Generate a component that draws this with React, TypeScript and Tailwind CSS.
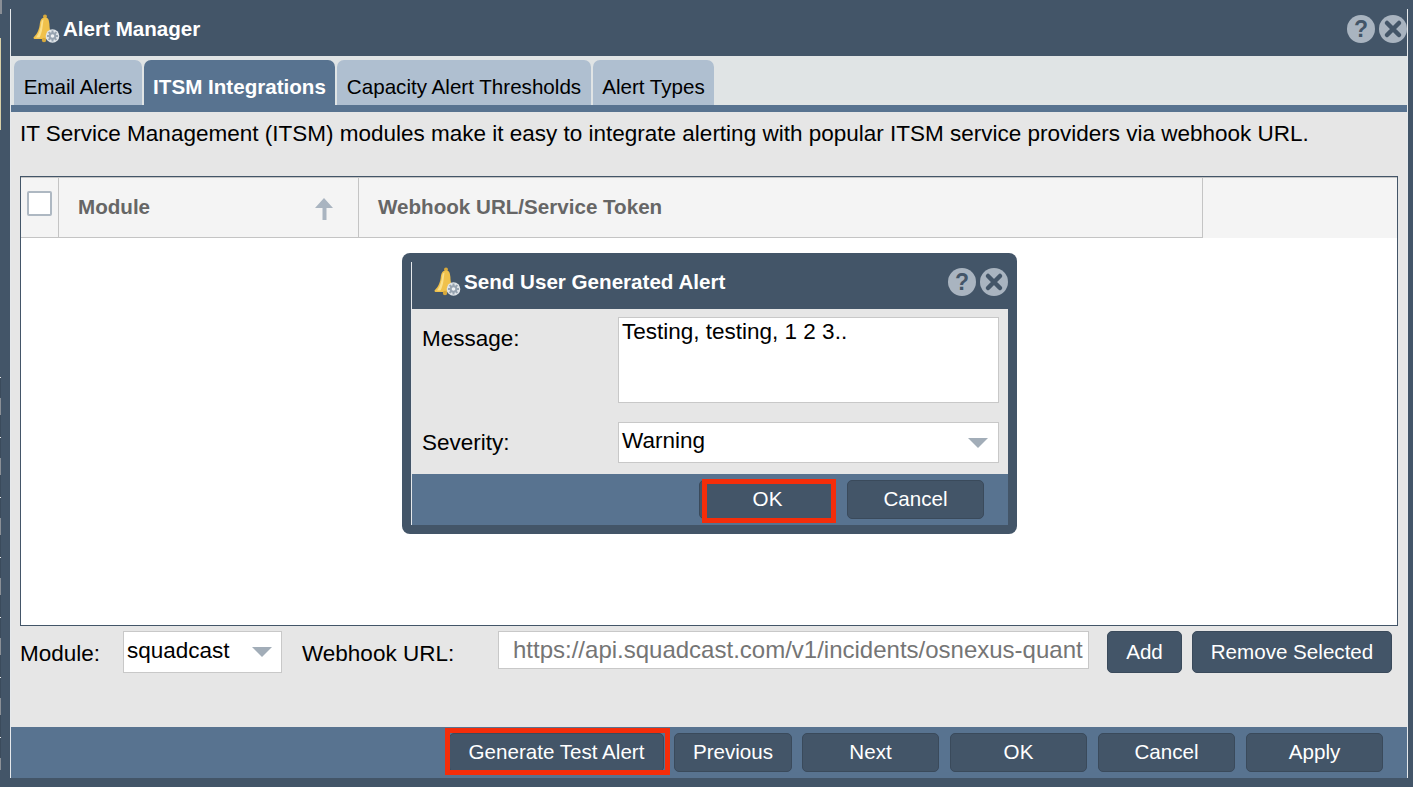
import { ReactNode } from "react";

const BellIcon = () => (
  <svg width="27" height="29" viewBox="0 0 27 29">
    <circle cx="12" cy="2.5" r="2" fill="#d8a93c" />
    <path d="M12 3.500c-3.500 0-4.700 2.800-5.200 6.500C6.300 14.500 5 19 .5 23.500c0 1 .6 1.500 2 1.500h15c2 0 3-.5 3-1.500C17 19.500 16.600 14.500 16.400 10 16 6.300 15.500 3.500 12 3.500z" fill="#f0c14b" />
    <path d="M8.500 7.500C7.800 12 7 18.500 3 23.500h3.500C9.500 18.500 9.700 11 10.500 5.500c-1 .2-1.700 1-2 2z" fill="#fbe08a" />
    <circle cx="11" cy="26" r="2.200" fill="#d8a93c" />
    <circle cx="19.500" cy="22" r="6.800" fill="#dfe4e8" />
    <path d="M19.500 16.500v11M14 22h11M15.600 18.100l7.800 7.800M23.400 18.100l-7.800 7.800" stroke="#97a4b1" strokeWidth="2" />
    <circle cx="19.500" cy="22" r="3.800" fill="#97a4b1" />
    <circle cx="19.500" cy="22" r="1.800" fill="#eef1f3" />
  </svg>
);

const RoundButton = ({ kind }: { kind: "help" | "close" }) => (
  <div className="w-[28px] h-[28px] rounded-full bg-[#a9b4c0] flex items-center justify-center">
    {kind === "help" ? (
      <span className="text-[#435568] text-[23px] font-bold leading-none">?</span>
    ) : (
      <svg width="20" height="20" viewBox="0 0 20 20">
        <path d="M4 4l12 12M16 4 4 16" stroke="#435568" strokeWidth="4.500" strokeLinecap="round" />
      </svg>
    )}
  </div>
);

const Btn = ({ children, className }: { children: ReactNode; className: string }) => (
  <button className={`relative bg-[#435568] border border-[#3a4a5b] rounded-[5px] text-white text-[20.6px] flex items-center justify-center ${className}`}>
    {children}
  </button>
);

const Caret = () => (
  <div className="w-0 h-0 border-l-[10px] border-r-[10px] border-t-[10px] border-l-transparent border-r-transparent border-t-[#a2adb8]" />
);

const Tab = ({ label, active, className }: { label: string; active?: boolean; className: string }) => (
  <div className={`h-[45px] rounded-t-[7px] flex items-center justify-center pt-[9px] text-[20.6px] ${active ? "bg-[#587390] text-white font-bold" : "bg-[#afbfd0] text-black"} ${className}`}>
    {label}
  </div>
);

const WindowHeader = ({ title }: { title: string }) => (
  <div className="h-[47px] pb-[7px] flex items-center justify-between shrink-0">
    <div className="flex items-center">
      <div className="ml-[22px] mr-[3px] flex"><BellIcon /></div>
      <span className="text-white font-bold text-[20.6px]">{title}</span>
    </div>
    <div className="flex items-center gap-[4px]">
      <RoundButton kind="help" />
      <RoundButton kind="close" />
    </div>
  </div>
);

export default function App() {
  return (
    <div className="relative w-[1413px] h-[787px] overflow-hidden bg-[#435568] font-['Liberation_Sans',Arial,sans-serif] text-black">
      {/* edge of the window behind */}
      <div className="absolute left-0 top-0 h-[14px] w-[2px] bg-[#8a8f96]" />
      <div className="absolute left-0 top-[38px] h-[92px] w-[1px] bg-[#d8cfa8]" />
      <div className="absolute left-0 top-[377px] bottom-[17px] w-[1px] bg-[repeating-linear-gradient(to_bottom,#e8e8e8_0,#e8e8e8_1px,#3b4b5c_1px,#3b4b5c_21px,#8a8f96_21px,#8a8f96_38px,#3b4b5c_38px,#3b4b5c_60px)]" />

      {/* main window */}
      <div className="ml-[10px] w-[1398px] pt-[9px] pb-[9px] h-[787px]">
        <div className="h-[769px] flex flex-col border-x border-[#e6e9ec]">
          <WindowHeader title="Alert Manager" />
          <div className="h-[49px] bg-[#e0e4e5] flex items-end pl-[3px] gap-[2px] shrink-0">
            <Tab label="Email Alerts" className="w-[128px]" />
            <Tab label="ITSM Integrations" active className="w-[191px]" />
            <Tab label="Capacity Alert Thresholds" className="w-[254px]" />
            <Tab label="Alert Types" className="w-[121px]" />
          </div>
          <div className="h-[7px] bg-[#587390] shrink-0" />
          <div className="h-[615px] bg-[#e6e6e6] flex flex-col shrink-0 px-[9px]">
            <p className="text-[22.5px] leading-[26px] mt-[9px] whitespace-nowrap">
              IT Service Management (ITSM) modules make it easy to integrate alerting with popular ITSM service providers via webhook URL.
            </p>
            <div className="mt-[29px] h-[450px] border border-[#435568] bg-white flex flex-col shrink-0">
              <div className="h-[61px] flex border-t border-[#c4c4c4] bg-[#f4f4f4] text-[#666666] font-bold text-[20.6px] shrink-0">
                <div className="w-[38px] border-r border-b border-[#c4c4c4] pl-[6px] pt-[13px]">
                  <div className="w-[25px] h-[25px] border-2 border-[#aeb8c2] bg-white rounded-[2px]" />
                </div>
                <div className="w-[300px] border-r border-b border-[#c4c4c4] pl-[19px] pr-[25px] flex items-center justify-between">
                  <span>Module</span>
                  <svg width="18" height="22" viewBox="0 0 18 22" className="mt-[2px]">
                    <path d="M9 0 18 10h-6.500v12h-4V10H0z" fill="#a9b4c0" />
                  </svg>
                </div>
                <div className="w-[844px] border-r border-b border-[#c4c4c4] pl-[19px] flex items-center">Webhook URL/Service Token</div>
              </div>
            </div>
            <div className="flex items-start mt-[5px] h-[42px]">
              <span className="text-[22.5px] leading-[26px] mt-[10px] w-[103px]">Module:</span>
              <div className="w-[159px] h-[42px] bg-white border border-[#c8c8c8] flex items-center justify-between pl-[3px] pr-[9px]">
                <span className="text-[22.5px] leading-[26px] -mt-[3px]">squadcast</span>
                <Caret />
              </div>
              <span className="text-[22.5px] leading-[26px] mt-[10px] ml-[20px] w-[196px]">Webhook URL:</span>
              <div className="w-[591px] h-[38px] bg-white border border-[#c8c8c8] flex items-center pl-[14px] text-[24px] text-[#757575] overflow-hidden whitespace-nowrap">
                https://api.squadcast.com/v1/incidents/osnexus-quant
              </div>
              <Btn className="w-[75px] h-[42px] ml-[18px]">Add</Btn>
              <Btn className="w-[200px] h-[42px] ml-[10px]">Remove Selected</Btn>
            </div>
          </div>
          <div className="h-[51px] bg-[#587390] shrink-0 flex items-start pt-[6px] pl-[438px]">
            <Btn className="w-[215px] h-[39px]">
              Generate Test Alert
              <span className="absolute -left-[5px] -right-[7px] -top-[6px] -bottom-[4px] border-[5px] border-[#f52d0a]" />
            </Btn>
            <Btn className="w-[118px] h-[39px] ml-[10px]">Previous</Btn>
            <Btn className="w-[137px] h-[39px] ml-[10px]">Next</Btn>
            <Btn className="w-[137px] h-[39px] ml-[11px]">OK</Btn>
            <Btn className="w-[137px] h-[39px] ml-[11px]">Cancel</Btn>
            <Btn className="w-[137px] h-[39px] ml-[11px]">Apply</Btn>
          </div>
        </div>
      </div>

      {/* dialog */}
      <div className="absolute left-[402px] top-[253px] w-[615px] h-[281px] rounded-[8px] bg-[#435568] pt-[9px] pb-[9px] pl-[9px] pr-[9px]">
        <div className="h-[263px] flex flex-col border-l border-[#e6e9ec]">
          <WindowHeader title="Send User Generated Alert" />
          <div className="h-[165px] bg-[#e6e6e6] shrink-0 flex flex-col pl-[10px] pr-[9px]">
            <div className="flex mt-[8px]">
              <span className="text-[22.5px] leading-[26px] w-[196px] mt-[9px]">Message:</span>
              <div className="w-[381px] h-[86px] bg-white border border-[#c8c8c8] text-[22.5px] pl-[3px] pt-[1px] leading-[26px]">Testing, testing, 1 2 3..</div>
            </div>
            <div className="flex mt-[19px]">
              <span className="text-[22.5px] leading-[26px] w-[196px] mt-[8px]">Severity:</span>
              <div className="w-[381px] h-[41px] bg-white border border-[#c8c8c8] flex items-center justify-between pl-[3px] pr-[10px]">
                <span className="text-[22.5px] leading-[26px] -mt-[3px]">Warning</span>
                <Caret />
              </div>
            </div>
          </div>
          <div className="h-[51px] bg-[#587390] shrink-0 flex items-start pt-[6px] pl-[287px]">
            <Btn className="w-[137px] h-[39px]">
              OK
              <span className="absolute left-[2px] -right-[1px] -top-[2px] -bottom-[5px] border-[5px] border-[#f52d0a]" />
            </Btn>
            <Btn className="w-[137px] h-[39px] ml-[11px]">Cancel</Btn>
          </div>
        </div>
      </div>
    </div>
  );
}
